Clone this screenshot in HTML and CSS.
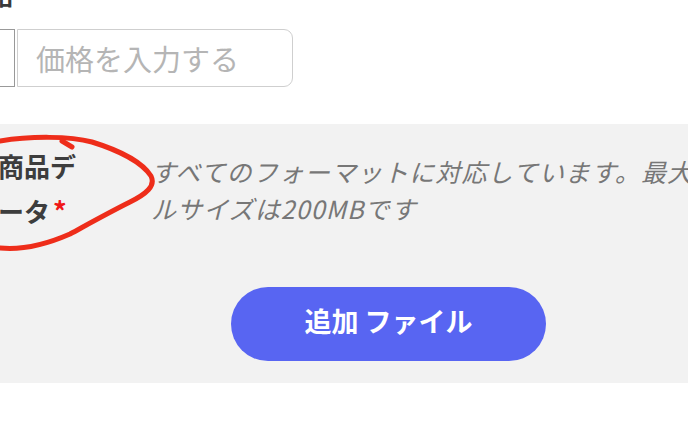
FILE: index.html
```html
<!DOCTYPE html>
<html>
  <head>
    <meta charset="utf-8">
    <title>商品登録</title>
    <link rel="stylesheet" href="styles.css">
  </head>
  <body>
    <div class="page">
      <div class="field">
        <div class="field-label">販売価格</div>
        <div class="input-group">
          <span class="addon">¥</span>
          <input class="price" type="text" placeholder="価格を入力する">
        </div>
      </div>

      <section class="upload">
        <div class="upload-row">
          <div class="upload-label">商品データ<span class="req">*</span></div>
          <p class="upload-note">すべてのフォーマットに対応しています。最大ファイルサイズは200MBです</p>
        </div>
        <button class="upload-btn">追加 ファイル</button>

        <!-- hand drawn mark around the label -->
        <svg class="scribble" width="170" height="140" viewBox="0 0 170 140">
          <path d="M0 17 C30 12 70 12 92 18 C118 26 142 38 151 52 C156 62 146 70 130 78 C108 89 92 98 70 110 C45 121 20 126 0 124" />
          <path d="M62 17 L72 23" />
        </svg>
      </section>
    </div>
  </body>
</html>
```

FILE: styles.css
```css
/* Reset default styles */
* {
  margin: 0;
  padding: 0;
  box-sizing: border-box;
}

html, body {
  overflow: hidden;
}

body {
  font-family: "Noto Sans CJK JP", "Noto Sans", sans-serif;
  background-color: #fff;
  width: 688px;
  height: 424px;
}

/* Price field */
.field-label {
  font-size: 26px;
  font-weight: bold;
  color: #3a3a3a;
  line-height: 34px;
  margin-top: -23px;
  margin-left: -90px;
  white-space: nowrap;
}

.input-group {
  display: flex;
  gap: 2px;
  margin-top: 18px;
  height: 58px;
}

.addon {
  width: 64px;
  margin-left: -49px;
  border: 1px solid #999;
  border-left: none;
  display: flex;
  align-items: center;
  justify-content: center;
  color: #fff;
}

.price {
  width: 276px;
  height: 58px;
  border: 1px solid #cfcfcf;
  border-radius: 0 9px 9px 0;
  padding-left: 18px;
  font-family: inherit;
  font-size: 29px;
  color: #333;
  outline: none;
}

.price::placeholder {
  color: #b5b5b5;
}

/* Upload panel */
.upload {
  position: relative;
  margin-top: 37px;
  background-color: #f2f2f2;
  padding: 19px 0 22px 0;
}

.upload-row {
  display: flex;
  gap: 73px;
  margin-left: -2px;
}

.upload-label {
  flex: none;
  width: 80px;
  font-size: 26px;
  font-weight: bold;
  color: #3d3d3d;
  line-height: 45px;
}

.req {
  color: #f01818;
  font-size: 27px;
  margin-left: 3px;
}

.upload-note {
  flex: none;
  width: 636px;
  margin-top: 10px;
  font-size: 25px;
  letter-spacing: 1.1px;
  line-height: 37px;
  font-style: italic;
  color: #777;
}

.upload-btn {
  display: block;
  margin: 54px 0 0 231px;
  width: 315px;
  height: 74px;
  padding-bottom: 7px;
  border: none;
  border-radius: 37px;
  background-color: #5865f2;
  color: #fff;
  font-family: inherit;
  font-size: 27px;
  font-weight: bold;
}

.scribble {
  position: absolute;
  left: 0;
  top: 0;
  fill: none;
  stroke: #ee2d1a;
  stroke-width: 5;
  stroke-linecap: round;
  stroke-linejoin: round;
}
```
